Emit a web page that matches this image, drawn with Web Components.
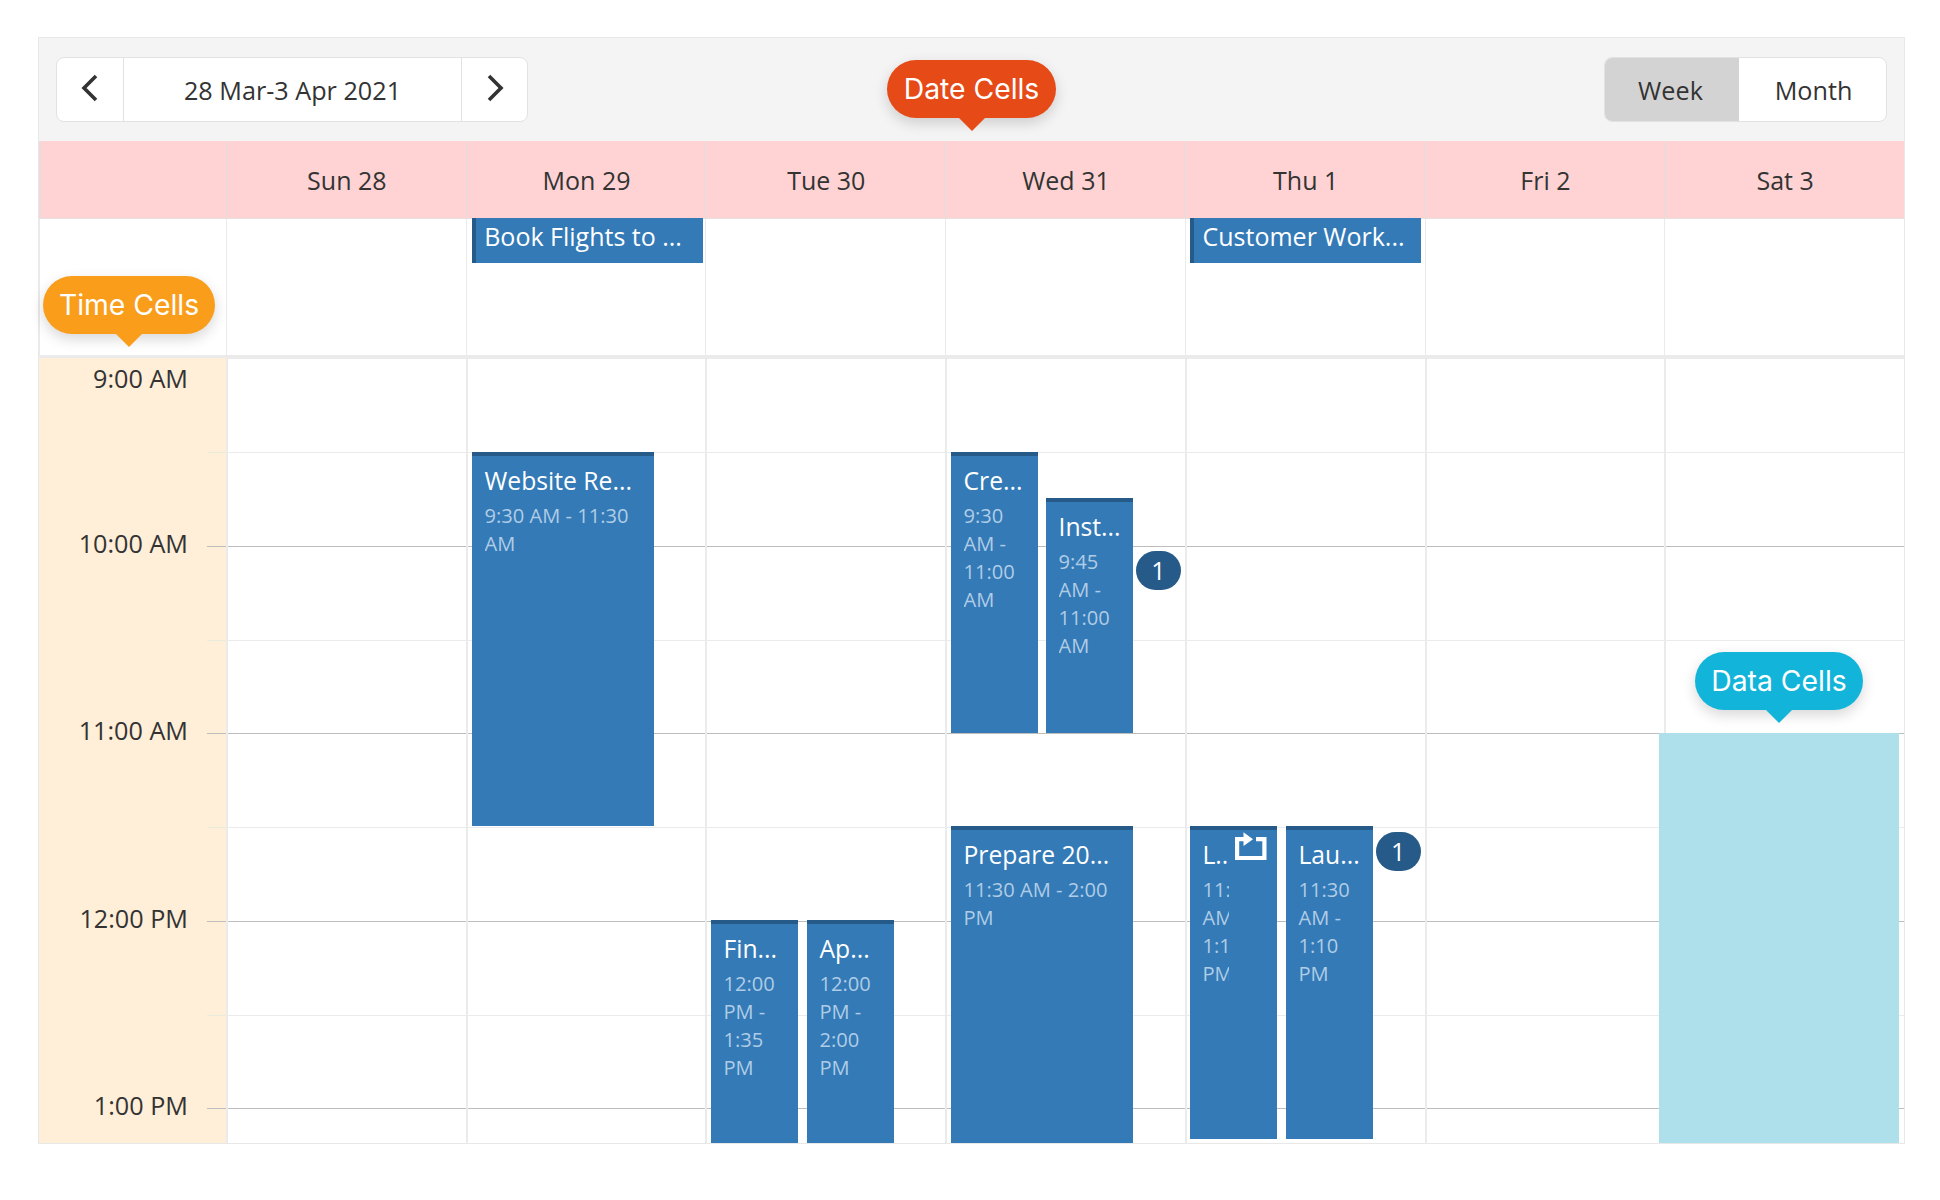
<!DOCTYPE html>
<html lang="en"><head><meta charset="utf-8"><title>Scheduler</title>
<style>
html,body{margin:0;padding:0;background:#fff}
body{font-family:"Open Sans","Liberation Sans",sans-serif;color:#333}
</style></head>
<body>
<sched-root>
  <sched-toolbar slot="toolbar">
    <sched-nav slot="start" label="28 Mar-3 Apr 2021"></sched-nav>
    <sched-views slot="end"></sched-views>
  </sched-toolbar>
  <sched-header slot="header"></sched-header>
  <sched-allday slot="allday">
    <sched-allday-item style="--l:245.7px;--w:231px" text="Book Flights to ..."></sched-allday-item>
    <sched-allday-item style="--l:964px;--w:231px" text="Customer Work..."></sched-allday-item>
  </sched-allday>
  <sched-grid slot="grid">
    <sched-day></sched-day>
    <sched-day>
      <sched-appt style="--l:6.3px;--w:182px;--t:93.6px;--h:374px" name="Website Re..." time="9:30 AM - 11:30 AM"></sched-appt>
    </sched-day>
    <sched-day>
      <sched-appt style="--l:5.57px;--w:87px;--t:562px;--h:300px" name="Fin..." time="12:00 PM - 1:35 PM"></sched-appt>
      <sched-appt style="--l:101.57px;--w:87px;--t:562px;--h:300px" name="Ap..." time="12:00 PM - 2:00 PM"></sched-appt>
    </sched-day>
    <sched-day>
      <sched-appt style="--l:5.86px;--w:87px;--t:93.6px;--h:281px" name="Cre..." time="9:30 AM - 11:00 AM"></sched-appt>
      <sched-appt style="--l:100.86px;--w:87px;--t:140px;--h:235px" name="Inst..." time="9:45 AM - 11:00 AM"></sched-appt>
      <sched-badge style="--l:190.86px;--t:192.6px">1</sched-badge>
      <sched-appt style="--l:5.86px;--w:182px;--t:468px;--h:500px" name="Prepare 20..." time="11:30 AM - 2:00 PM"></sched-appt>
    </sched-day>
    <sched-day>
      <sched-appt recurring style="--l:5.14px;--w:87px;--t:468px;--h:312.5px" name="L..." time="11:30 AM - 1:10 PM"></sched-appt>
      <sched-appt style="--l:101.14px;--w:87px;--t:468px;--h:312.5px" name="Lau..." time="11:30 AM - 1:10 PM"></sched-appt>
      <sched-badge style="--l:190.84px;--t:473.6px">1</sched-badge>
    </sched-day>
    <sched-day></sched-day>
    <sched-day><sched-cell-highlight></sched-cell-highlight></sched-day>
  </sched-grid>
  <sched-tip slot="tips" color="#e64a17" style="--x:887px;--y:60px;--w:169px">Date Cells</sched-tip>
  <sched-tip slot="tips" color="#f99d1b" style="--x:43px;--y:276px;--w:172px">Time Cells</sched-tip>
  <sched-tip slot="tips" color="#12b4da" style="--x:1695px;--y:652px;--w:168px">Data Cells</sched-tip>
</sched-root>
<script>
function def(name, css, html, init){
  customElements.define(name, class extends HTMLElement{
    connectedCallback(){
      if(this.shadowRoot) return;
      const r=this.attachShadow({mode:'open'});
      const h=typeof html==='function'?html(this):html;
      r.innerHTML='<style>'+css+'</style>'+h;
      if(init) init(this,r);
    }
  });
}
const esc=s=>String(s==null?'':s);
def('sched-root',`
  :host{display:block;position:absolute;left:0;top:0;width:1940px;height:1200px;box-sizing:border-box;padding:37px 35px 0 38px}
  .box{width:1867px;box-sizing:border-box;border:1px solid #e8e8e8;background:#fff}
`,`<div class="box"><slot name="toolbar"></slot><slot name="header"></slot><slot name="allday"></slot><slot name="grid"></slot></div><slot name="tips"></slot>`);

def('sched-toolbar',`
  :host{display:flex;justify-content:space-between;align-items:flex-start;height:103px;box-sizing:border-box;padding:19px 17px 19px 17px;background:#f4f4f4}
`,`<slot name="start"></slot><slot name="end"></slot>`);

def('sched-nav',`
  :host{display:flex;height:65px;box-sizing:border-box;width:472px;background:#fff;border:1px solid #e2e2e2;border-radius:8px;font-size:25.2px;color:#333}
  .b{width:66px;flex:none;display:flex;align-items:center;justify-content:center}
  .b svg{display:block;width:26px;height:32px;margin-top:-3px}
  .l{flex:1;display:flex;align-items:center;justify-content:center;border:solid #e2e2e2;border-width:0 1px}
  .b.next{width:65px}
`,el=>`<div class="b"><svg viewBox="0 0 26 32"><path d="M19 4 L7 16 L19 28" fill="none" stroke="#333" stroke-width="3.6"/></svg></div><div class="l">${esc(el.getAttribute('label'))}</div><div class="b next"><svg viewBox="0 0 26 32"><path d="M7 4 L19 16 L7 28" fill="none" stroke="#333" stroke-width="3.6"/></svg></div>`);

def('sched-views',`
  :host{display:flex;height:65px;box-sizing:border-box;width:283px;background:#fff;border:1px solid #e2e2e2;border-radius:8px;overflow:hidden;font-size:25.2px;color:#333}
  div{display:flex;align-items:center;justify-content:center;box-sizing:border-box}
  .on{width:134px;background:#d3d3d3;padding-right:3px}
  .off{flex:1;padding-left:2px}
`,`<div class="on">Week</div><div class="off">Month</div>`);

const days=['Sun 28','Mon 29','Tue 30','Wed 31','Thu 1','Fri 2','Sat 3'];
def('sched-header',`
  :host{display:grid;grid-template-columns:187px repeat(7,1fr);height:78px;box-sizing:border-box;background:#ffd3d4;border-bottom:1px solid #e8e0e0;font-size:25px;color:#333}
  div{display:flex;align-items:center;justify-content:center;border-left:2px solid #ecd9d9}
  div:first-child{border-left:0}
`,`<div></div>`+days.map(d=>`<div>${d}</div>`).join(''));

def('sched-allday',`
  :host{display:grid;position:relative;grid-template-columns:187px repeat(7,1fr);height:139.4px;box-sizing:border-box;border-bottom:3px solid #ebebeb}
  div{border-left:1px solid #ebebeb}
  div:first-child{border-left:0}
`,`<div></div>`+days.map(()=>`<div></div>`).join('')+`<slot></slot>`);

def('sched-allday-item',`
  :host{position:absolute;left:calc(187px + var(--l));top:-1px;width:var(--w);height:45px;box-sizing:border-box;background:#337ab7;border-left:4px solid #265a88;color:#fff;font-size:25px;line-height:37px;padding-left:8.5px;white-space:nowrap;overflow:hidden}
`,el=>esc(el.getAttribute('text')));

def('sched-grid',`
  :host{display:grid;grid-template-columns:187px repeat(7,1fr);height:784.6px;overflow:hidden}
`,`<sched-times></sched-times><slot></slot>`);

const hours=[['9:00 AM',0],['10:00 AM',1],['11:00 AM',2],['12:00 PM',3],['1:00 PM',4]];
def('sched-times',`
  :host{display:block;position:relative;background:#ffeed8;font-size:25.2px;color:#333}
  .lab{position:absolute;right:38px;line-height:32px;white-space:nowrap}
  .tick{position:absolute;right:0;width:19px;height:1px;background:#bdbdbd}
  .tick.h{background:#e9ebdd}
`,()=>{
  let s='';
  for(let i=1;i<=8;i++){s+=`<div class="tick ${i%2?'h':''}" style="top:${93.75*i}px"></div>`;}
  hours.forEach(([t,i])=>{const y=i===0?4:187.5*i-19;s+=`<div class="lab" style="top:${y}px">${t}</div>`;});
  return s;
});

def('sched-day',`
  :host{display:block;position:relative;border-left:2px solid #ebebeb;min-width:0}
  .r{height:93.75px;box-sizing:border-box;border-top:1px solid #ebebeb}
  .r.h{border-top-color:#bdbdbd}
  .r:first-child{border-top:0}
`,()=>{let s='';for(let i=0;i<9;i++){s+=`<div class="r ${i&&i%2===0?'h':''}"></div>`;}return s+'<slot></slot>';});

def('sched-appt',`
  :host{position:absolute;left:calc(var(--l) - 2px);top:var(--t);width:var(--w);height:var(--h);box-sizing:border-box;background:#337ab7;border-top:4px solid #265a88;color:#fff;overflow:hidden;padding:8px 12.5px 0 12.5px}
  .n{font-size:24.7px;line-height:34px;white-space:nowrap}
  .clip{overflow:hidden;margin-top:4px}
  .t{font-size:20.1px;line-height:28px;color:#b0cce5}
  :host([recurring]) .clip,:host([recurring]) .n{width:27px;overflow:hidden}
  :host([recurring]) .t{width:61px}
  svg{position:absolute;left:45px;top:2px;width:33px;height:30px}
`,el=>`<div class="n">${esc(el.getAttribute('name'))}</div><div class="clip"><div class="t">${esc(el.getAttribute('time'))}</div></div>`+(el.hasAttribute('recurring')?`<svg viewBox="0 0 33 30"><path d="M9 7.1H2.1V26H29.4V7.1H21" fill="none" stroke="#fff" stroke-width="4.2"/><path d="M8.5 .3 L18 7.2 L8.5 14Z" fill="#fff"/></svg>`:''));

def('sched-badge',`
  :host{position:absolute;left:calc(var(--l) - 2px);top:var(--t);width:45px;height:39px;border-radius:20px;background:#265a88;color:#fff;font-size:25px;display:flex;align-items:center;justify-content:center}
`,`<slot></slot>`);

def('sched-cell-highlight',`
  :host{position:absolute;left:-7px;width:240px;top:375px;height:420px;background:#aee0ec}
`,``);

def('sched-tip',`
  :host{position:absolute;left:var(--x);top:var(--y);width:var(--w);height:58px;border-radius:29px;display:flex;align-items:center;justify-content:center;color:#fff;font-family:Inter,"Liberation Sans",sans-serif;font-size:28.3px;line-height:1;box-shadow:0 5px 14px rgba(0,0,0,.16);background:var(--c);z-index:5}
  i{position:absolute;left:50%;bottom:-13px;margin-left:-13px;width:0;height:0;border:solid transparent;border-width:13px 13px 0;border-top-color:var(--c)}
  span{position:relative}
`,`<span><slot></slot></span><i></i>`,(el)=>{el.style.setProperty('--c',el.getAttribute('color'));});
</script>
</body></html>
